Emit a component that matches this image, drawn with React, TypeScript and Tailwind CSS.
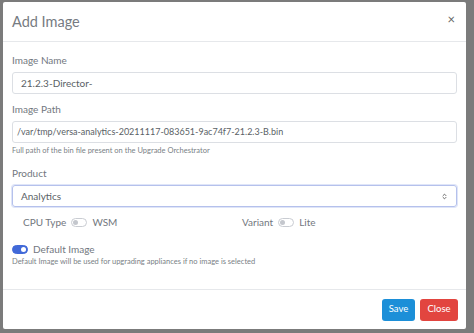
import { ChevronsUpDown } from "lucide-react";

function Toggle({ on = false }: { on?: boolean }) {
  return (
    <span
      className={
        "relative inline-flex h-[9px] w-[16px] shrink-0 items-center rounded-full border " +
        (on ? "border-[#4169d8] bg-[#4169d8]" : "border-[#c9ccd2] bg-white")
      }
    >
      <span
        className={
          "absolute h-[5px] w-[5px] rounded-full " +
          (on ? "right-[1px] bg-white" : "left-[1px] bg-[#c4c7cd]")
        }
      />
    </span>
  );
}

export default function App() {
  return (
    <div
      className="h-[333px] w-[474px] bg-[#7b7b7b] pl-[3px] pt-[2px]"
      style={{ fontFamily: 'Lato, "Open Sans", sans-serif' }}
    >
      <div className="flex h-[327px] w-[463px] flex-col rounded-[2px] bg-white">
        <div className="flex h-[40px] items-center justify-between border-b border-[#e6e8eb] pl-[9px] pr-[11px]">
          <h2 className="text-[14.5px] text-[#767b82]">Add Image</h2>
          <span className="-mt-[4px] text-[13px] leading-none text-[#666]">×</span>
        </div>

        <div className="flex-1 px-[9px] pt-[11px] text-[#72777e]">
          <label className="block text-[10px] leading-[14px]">Image Name</label>
          <div className="mt-[5px] flex h-[22px] items-center rounded-[3px] border border-[#dcdfe4] px-[8px] text-[10px] text-[#5a5f66]">
            21.2.3-Director-
          </div>

          <label className="mt-[8px] block text-[10px] leading-[14px]">Image Path</label>
          <div className="mt-[5px] flex h-[22px] items-center rounded-[3px] border border-[#dcdfe4] px-[4px] text-[9px] text-[#5a5f66]">
            /var/tmp/versa-analytics-20211117-083651-9ac74f7-21.2.3-B.bin
          </div>
          <p className="mt-[3px] text-[7.5px] leading-[10px] text-[#7a7f86]">
            Full path of the bin file present on the Upgrade Orchestrator
          </p>

          <label className="mt-[10px] block text-[10px] leading-[14px]">Product</label>
          <div className="mt-[5px] flex h-[22px] items-center justify-between rounded-[3px] border border-[#b5c1ec] px-[8px] text-[10px] text-[#5a5f66] shadow-[0_0_0_1px_#dfe5f8]">
            <span>Analytics</span>
            <ChevronsUpDown size={7} strokeWidth={3} className="text-[#555]" />
          </div>

          <div className="mt-[8px] grid grid-cols-2 pl-[11px] text-[10px] leading-[14px]">
            <div className="flex items-center gap-[5px]">
              <span>CPU Type</span>
              <Toggle />
              <span>WSM</span>
            </div>
            <div className="flex items-center gap-[5px] pl-[2px]">
              <span>Variant</span>
              <Toggle />
              <span>Lite</span>
            </div>
          </div>

          <div className="mt-[13px] flex items-center gap-[5px] text-[10px] leading-[14px]">
            <Toggle on />
            <span>Default Image</span>
          </div>
          <p className="mt-[1px] text-[7.5px] leading-[10px] text-[#7a7f86]">
            Default Image will be used for upgrading appliances if no image is selected
          </p>
        </div>

        <div className="flex h-[40px] items-center justify-end gap-[5px] border-t border-[#e6e8eb] pr-[8px]">
          <button className="h-[22px] w-[33px] rounded-[3px] bg-[#1c8fd8] text-[9.5px] text-white">Save</button>
          <button className="h-[22px] w-[38px] rounded-[3px] bg-[#e2453f] text-[9.5px] text-white">Close</button>
        </div>
      </div>
    </div>
  );
}
